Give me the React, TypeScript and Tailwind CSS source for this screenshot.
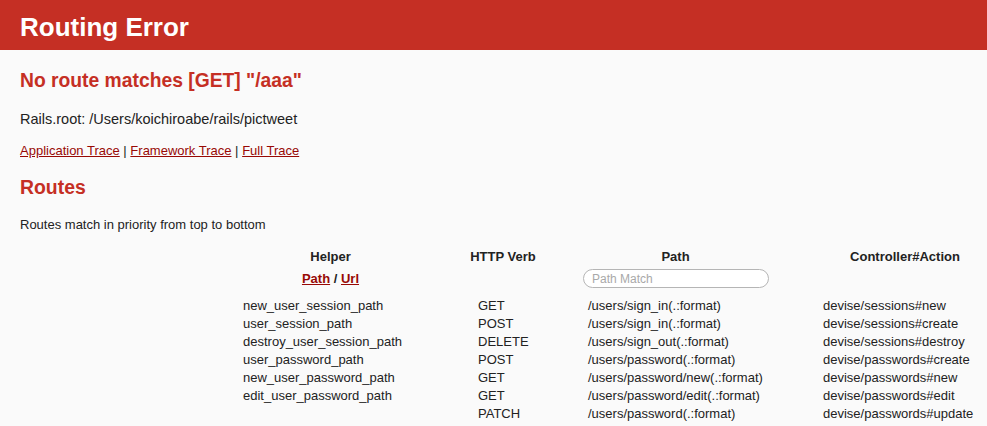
const ROUTES = [
  { helper: 'new_user_session_path', verb: 'GET', path: '/users/sign_in(.:format)', action: 'devise/sessions#new' },
  { helper: 'user_session_path', verb: 'POST', path: '/users/sign_in(.:format)', action: 'devise/sessions#create' },
  { helper: 'destroy_user_session_path', verb: 'DELETE', path: '/users/sign_out(.:format)', action: 'devise/sessions#destroy' },
  { helper: 'user_password_path', verb: 'POST', path: '/users/password(.:format)', action: 'devise/passwords#create' },
  { helper: 'new_user_password_path', verb: 'GET', path: '/users/password/new(.:format)', action: 'devise/passwords#new' },
  { helper: 'edit_user_password_path', verb: 'GET', path: '/users/password/edit(.:format)', action: 'devise/passwords#edit' },
  { helper: '', verb: 'PATCH', path: '/users/password(.:format)', action: 'devise/passwords#update' },
];

const ROW = 'grid grid-cols-[235px_110px_235px_194px]';

export default function App() {
  return (
    <div className="min-h-[426px] overflow-hidden bg-[#fafafa] font-['Liberation_Sans',Arial,sans-serif] text-[13px] text-[#222]">
      <header className="flex h-[50px] items-center bg-[#c52f24] px-5 pt-[3px]">
        <h1 className="text-[26px] font-bold leading-none text-white">Routing Error</h1>
      </header>

      <div className="px-5">
        <h2 className="mt-[18px] text-[19.3px] font-bold leading-[25px] text-[#c52f24]">
          No route matches [GET] "/aaa"
        </h2>
        <p className="mt-[17px] text-[14.5px] leading-[18px]">Rails.root: /Users/koichiroabe/rails/pictweet</p>
        <p className="mt-[14px] leading-[18px]">
          <a className="text-[#980905] underline">Application Trace</a> |{' '}
          <a className="text-[#980905] underline">Framework Trace</a> |{' '}
          <a className="text-[#980905] underline">Full Trace</a>
        </p>

        <h2 className="mt-[15px] text-[19.4px] font-bold leading-[25px] text-[#c52f24]">Routes</h2>
        <p className="mt-[16px] leading-[18px]">Routes match in priority from top to bottom</p>

        <div className="-mr-5 mt-[14px] ml-[193px]">
          <div className={`${ROW} whitespace-nowrap font-bold leading-[18px]`}>
            <div className="px-[30px] text-center">Helper</div>
            <div className="text-center">HTTP Verb</div>
            <div className="px-[30px] text-center">Path</div>
            <div className="pl-[30px] text-center">Controller#Action</div>
          </div>
          <div className={`${ROW} mt-[3px] items-center`}>
            <div className="px-[30px] text-center font-bold leading-[18px]">
              <a className="text-[#980905] underline">Path</a> /{' '}
              <a className="text-[#980905] underline">Url</a>
            </div>
            <div />
            <div className="px-[30px]">
              <input
                placeholder="Path Match"
                className="-ml-[5px] block h-[19px] w-[186px] rounded-full border border-[#b5b5b5] bg-white px-2 text-[12px] leading-none text-[#333] placeholder:text-[#a9a9a9]"
              />
            </div>
            <div />
          </div>
          <div className="mt-[9px]">
            {ROUTES.map((r) => (
              <div key={r.verb + r.path + r.action} className={`${ROW} whitespace-nowrap leading-[18px]`}>
                <div className="px-[30px]">{r.helper}</div>
                <div className="px-[30px]">{r.verb}</div>
                <div className="px-[30px]">{r.path}</div>
                <div className="pl-[30px]">{r.action}</div>
              </div>
            ))}
          </div>
        </div>
      </div>
    </div>
  );
}
